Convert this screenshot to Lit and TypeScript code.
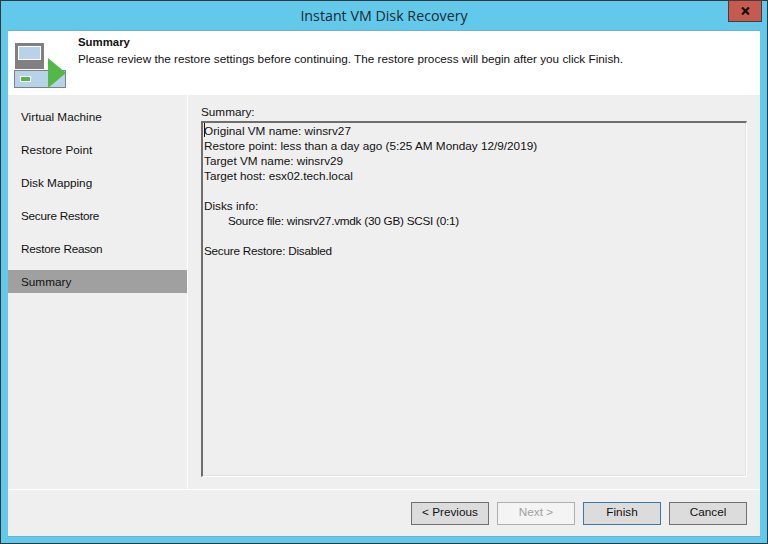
import { LitElement, html, css } from "lit";
import { customElement } from "lit/decorators.js";

const STEPS = ["Virtual Machine", "Restore Point", "Disk Mapping", "Secure Restore", "Restore Reason", "Summary"];
const TIGHT = ["Secure Restore", "Restore Reason"];

@customElement("app-root")
export class AppRoot extends LitElement {
  static styles = css`
    :host {
      display: block;
      width: 768px;
      height: 544px;
      overflow: hidden;
      font-family: "Liberation Sans", Arial, sans-serif;
      font-size: 11.75px;
      color: #111;
    }
    .win {
      box-sizing: border-box;
      width: 768px;
      height: 544px;
      background: #63c9ea;
      border: 1px solid #2f3a40;
      display: flex;
      flex-direction: column;
    }
    .titlebar {
      height: 30px;
      flex: none;
      display: flex;
      justify-content: center;
      align-items: center;
      padding-bottom: 1px;
      box-sizing: border-box;
      position: relative;
      font-family: "Open Sans", sans-serif;
      font-size: 14.25px;
      color: #1a2a33;
    }
    .close {
      position: absolute;
      right: 5px;
      top: -1px;
      width: 34px;
      height: 22px;
      box-sizing: border-box;
      background: #c75a50;
      border: 1px solid #4a3a3a;
      display: flex;
      align-items: center;
      justify-content: center;
    }
    .body {
      margin: 0 7px 7px;
      flex: 1;
      display: flex;
      flex-direction: column;
      background: #efefef;
      box-shadow: 0 -1px 0 #6fb2cc, 0 1px 0 #6fb2cc;
      min-height: 0;
    }
    .header {
      height: 64px;
      flex: none;
      background: #fff;
      display: flex;
    }
    .logo { width: 70px; flex: none; padding: 11px 0 0 6px; box-sizing: border-box; }
    .htext { padding-top: 3px; line-height: 17px; }
    .htitle { font-weight: 700; height: 16px; font-size: 11.4px; }
    .main { flex: 1; display: flex; border-bottom: 1px solid #fff; min-height: 0; }
    .side {
      width: 179px;
      flex: none;
      padding-top: 10px;
      border-right: 1px solid #fff;
    }
    .step {
      height: 23px;
      margin-bottom: 10px;
      padding-left: 13px;
      display: flex;
      align-items: center;
    }
    .step.active { background: #a0a0a0; }
    .tight { letter-spacing: -0.25px; }
    .pane { flex: 1; padding: 8px 13px 12px 13px; display: flex; flex-direction: column; min-width: 0; }
    .label { height: 18px; line-height: 17px; }
    .box {
      flex: 1;
      box-sizing: border-box;
      border-top: 2px solid #6e6e6e;
      border-left: 2px solid #6e6e6e;
      border-right: 1px solid #fff;
      border-bottom: 1px solid #fff;
      box-shadow: inset -1px -1px 0 #e2e2e2;
      padding: 0 0 0 1px;
      line-height: 15px;
      position: relative;
    }
    .line { height: 15px; white-space: pre; }
    .indent { padding-left: 24px; }
    .caret { position: absolute; left: 1px; top: 0; width: 1px; height: 14px; background: #111; }
    .footer {
      height: 46px;
      flex: none;
      display: flex;
      justify-content: flex-end;
      gap: 8px;
      padding: 12px 13px 0 0;
      box-sizing: border-box;
    }
    button {
      width: 78px;
      height: 23px;
      box-sizing: border-box;
      background: #dcdcdc;
      border: 1px solid #707070;
      font: inherit;
      color: #111;
      padding: 0 0 4px;
    }
    button.default { border-color: #3e78a8; }
    button[disabled] { background: #f4f4f4; border-color: #b0b0b0; color: #a0a0a0; }
  `;

  render() {
    return html`
      <div class="win">
        <div class="titlebar">
          Instant VM Disk Recovery
          <div class="close">
            <svg width="9" height="8" viewBox="0 0 9 8"><path d="M1 0.5 L8 7.5 M8 0.5 L1 7.5" stroke="#111" stroke-width="2.2" fill="none"/></svg>
          </div>
        </div>
        <div class="body">
          <div class="header">
            <div class="logo">
              <svg width="52" height="47" viewBox="0 0 52 47">
                <rect x="1" y="1" width="29" height="26" fill="#808080"/>
                <rect x="4.5" y="4.5" width="22" height="13" fill="#b8d2ea" stroke="#fff" stroke-width="1"/>
                <rect x="0.5" y="28.5" width="51" height="17" fill="#b8d2ea" stroke="#808080" stroke-width="1"/>
                <rect x="6.5" y="34.5" width="10" height="5" fill="#52b848" stroke="#fff" stroke-width="1"/>
                <path d="M34 16 L52 31 L34 46 Z" fill="#52b848"/>
              </svg>
            </div>
            <div class="htext">
              <div class="htitle">Summary</div>
              <div>Please review the restore settings before continuing. The restore process will begin after you click Finish.</div>
            </div>
          </div>
          <div class="main">
            <div class="side">
              ${STEPS.map((s) => html`<div class="step ${s === "Summary" ? "active" : ""} ${TIGHT.includes(s) ? "tight" : ""}">${s}</div>`)}
            </div>
            <div class="pane">
              <div class="label">Summary:</div>
              <div class="box">
                <span class="caret"></span>
                <div class="line">Original VM name: winsrv27</div>
                <div class="line">Restore point: less than a day ago (5:25 AM Monday 12/9/2019)</div>
                <div class="line">Target VM name: winsrv29</div>
                <div class="line">Target host: esx02.tech.local</div>
                <div class="line"></div>
                <div class="line">Disks info:</div>
                <div class="line indent tight">Source file: winsrv27.vmdk (30 GB) SCSI (0:1)</div>
                <div class="line"></div>
                <div class="line tight">Secure Restore: Disabled</div>
              </div>
            </div>
          </div>
          <div class="footer">
            <button>&lt; Previous</button>
            <button disabled>Next &gt;</button>
            <button class="default">Finish</button>
            <button>Cancel</button>
          </div>
        </div>
      </div>
    `;
  }
}
